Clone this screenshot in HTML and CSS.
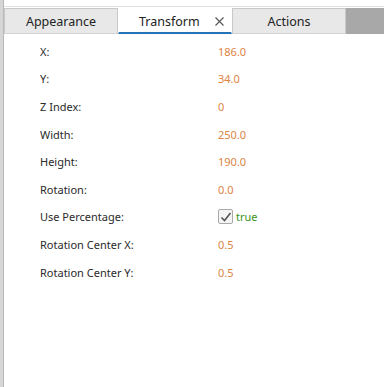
FILE: index.html
```html
<!DOCTYPE html>
<html lang="en">
<head>
    <meta charset="UTF-8">
    <title>Properties</title>
    <link rel="stylesheet" href="styles.css">
</head>
<body>
    <div class="panel">
        <div class="top-strip"></div>
        <div class="tabs">
            <div class="tab">Appearance</div>
            <div class="tab active">
                Transform
                <svg class="close" width="9" height="9" viewBox="0 0 9 9"><path d="M0.5 0.5 L8.5 8.5 M8.5 0.5 L0.5 8.5" stroke="#555" stroke-width="1.1"/></svg>
            </div>
            <div class="tab">Actions</div>
            <div class="tab-filler"></div>
        </div>
        <div class="props">
            <div class="row"><span class="label">X:</span><span class="value">186.0</span></div>
            <div class="row"><span class="label">Y:</span><span class="value">34.0</span></div>
            <div class="row"><span class="label">Z Index:</span><span class="value">0</span></div>
            <div class="row"><span class="label">Width:</span><span class="value">250.0</span></div>
            <div class="row"><span class="label">Height:</span><span class="value">190.0</span></div>
            <div class="row"><span class="label">Rotation:</span><span class="value">0.0</span></div>
            <div class="row">
                <span class="label">Use Percentage:</span>
                <span class="value bool">
                    <span class="check">
                        <svg width="12" height="12" viewBox="0 0 12 12"><path d="M1.5 6.5 L4.5 9.5 L10.5 2" fill="none" stroke="#555" stroke-width="1.6"/></svg>
                    </span>
                    <span class="true">true</span>
                </span>
            </div>
            <div class="row"><span class="label">Rotation Center X:</span><span class="value">0.5</span></div>
            <div class="row"><span class="label">Rotation Center Y:</span><span class="value">0.5</span></div>
        </div>
    </div>
</body>
</html>
```

FILE: styles.css
```css
* {
    margin: 0;
    padding: 0;
    box-sizing: border-box;
}

body {
    font-family: "Noto Sans", "Open Sans", sans-serif;
    background: #fff;
    width: 384px;
    height: 387px;
    overflow: hidden;
}

.panel {
    height: 387px;
    border-left: 3px solid #d6d6d6;
    position: relative;
}

.panel::before {
    content: "";
    position: absolute;
    left: 0;
    top: 0;
    bottom: 0;
    width: 1px;
    background: #b9b9b9;
}

.top-strip {
    height: 7px;
    border-bottom: 1px solid #e2e2e2;
    margin-bottom: 1px;
}

.tabs {
    display: flex;
    height: 26px;
    margin-left: 1px;
}

.tab {
    width: 114px;
    display: flex;
    align-items: center;
    justify-content: center;
    padding-top: 1px;
    font-size: 12.5px;
    color: #222;
    background: #e8e8e8;
    border: 1px solid #c9c9c9;
    border-bottom-color: #d4d4d4;
}

.tab.active {
    background: #fff;
    border-color: #fff;
    border-bottom: 2px solid #2473b8;
    justify-content: flex-start;
    padding-left: 20px;
    padding-top: 2px;
}

.close {
    margin-left: 15px;
}

.tab-filler {
    flex: 1;
    background: #a8a8a8;
}

.props {
    padding-top: 3px;
}

.row {
    display: flex;
    align-items: center;
    height: 27.6px;
    padding-top: 1px;
    font-size: 11px;
}

.label {
    width: 215px;
    padding-left: 37px;
    color: #2a2a2a;
}

.value {
    color: #dc8442;
}

.bool {
    display: flex;
    align-items: center;
}

.check {
    width: 15px;
    height: 15px;
    border: 1px solid #a9a9a9;
    border-radius: 2px;
    background: #f4f4f4;
    display: flex;
    align-items: center;
    justify-content: center;
    margin-right: 3px;
}

.true {
    color: #3a9420;
}
```
